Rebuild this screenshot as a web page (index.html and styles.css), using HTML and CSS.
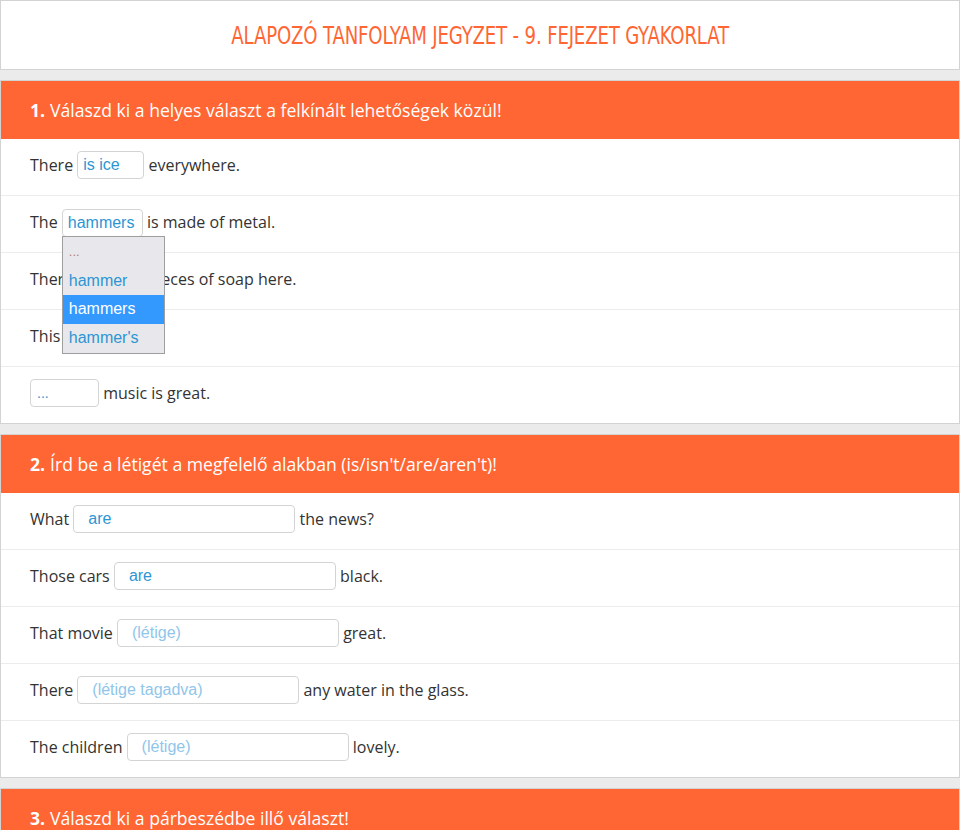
FILE: index.html
```html
<!DOCTYPE html>
<html lang="hu">
<head>
<meta charset="utf-8">
<title>Alapozó tanfolyam jegyzet</title>
<link rel="stylesheet" href="styles.css">
</head>
<body>
<div class="page">
  <header class="top">
    <h1 class="title"><span class="title-text">ALAPOZÓ TANFOLYAM JEGYZET - 9. FEJEZET GYAKORLAT</span></h1>
  </header>

  <section class="card">
    <div class="card-head"><b>1.</b> Válaszd ki a helyes választ a felkínált lehetőségek közül!</div>
    <div class="row">There <input class="box w67" value="is ice"> everywhere.</div>
    <div class="row">The <span class="sel-wrap"><select class="box sel w81"><option>hammers</option></select><span class="dropdown"><span class="opt dots">...</span><span class="opt">hammer</span><span class="opt active">hammers</span><span class="opt">hammer's</span></span></span> is made of metal.</div>
    <div class="row">There <input class="box w66 small" value="..."> pieces of soap here.</div>
    <div class="row">This <input class="box w69 small" value="..."></div>
    <div class="row"><input class="box w69 small" value="..."> music is great.</div>
  </section>

  <section class="card">
    <div class="card-head"><b>2.</b> Írd be a létigét a megfelelő alakban (is/isn't/are/aren't)!</div>
    <div class="row">What <input class="box wide" value="are"> the news?</div>
    <div class="row">Those cars <input class="box wide" value="are"> black.</div>
    <div class="row">That movie <input class="box wide" placeholder="(létige)"> great.</div>
    <div class="row">There <input class="box wide" placeholder="(létige tagadva)"> any water in the glass.</div>
    <div class="row">The children <input class="box wide" placeholder="(létige)"> lovely.</div>
  </section>

  <section class="card">
    <div class="card-head"><b>3.</b> Válaszd ki a párbeszédbe illő választ!</div>
  </section>
</div>
</body>
</html>
```
FILE: styles.css
```css
html, body {
  margin: 0;
  padding: 0;
}
body {
  background: #ebebeb;
  font-family: "Open Sans", "Noto Sans", sans-serif;
  color: #333;
  font-size: 16px;
}
.page {
  display: flex;
  flex-direction: column;
  gap: 10px;
  height: 830px;
  overflow: hidden;
}
.top {
  background: #fff;
  border: 1px solid #d3d3d3;
  height: 68px;
  display: flex;
  align-items: center;
  justify-content: center;
  flex-shrink: 0;
}
.title {
  margin: 0;
  font-weight: normal;
  font-size: 24px;
  color: #ff6633;
  line-height: 1;
}
.title-text {
  display: inline-block;
  font-family: "DejaVu Sans Condensed", "DejaVu Sans", sans-serif;
  transform: scaleX(0.84);
  letter-spacing: -0.2px;
}
.card {
  background: #fff;
  border: 1px solid #d3d3d3;
  flex-shrink: 0;
}
.card-head {
  background: #ff6633;
  color: #fff;
  height: 58px;
  display: flex;
  align-items: center;
  gap: 5px;
  padding-left: 29px;
  font-size: 17.6px;
}
.card-head b {
  font-weight: 700;
}
.row {
  box-sizing: border-box;
  height: 57px;
  border-top: 1px solid #ececec;
  padding: 12px 0 0 29px;
  display: flex;
  align-items: flex-start;
  line-height: 28px;
  white-space: pre;
}
.card-head + .row {
  border-top: none;
  height: 56px;
}
.box {
  box-sizing: border-box;
  height: 28px;
  border: 1px solid #d4d4d4;
  border-radius: 4px;
  background: #fff;
  font-family: "Liberation Sans", Arial, sans-serif;
  font-size: 16px;
  color: #2d95d3;
  padding: 0 5px;
  margin: 0;
  outline: none;
}
.box::placeholder {
  color: #8fc6ea;
}
.small {
  font-size: 14px;
  padding-left: 6px;
}
.w66 { width: 66px; }
.w67 { width: 67px; }
.w69 { width: 69px; }
.w81 { width: 81px; }
.wide {
  width: 222px;
  padding-left: 14px;
}
.sel {
  -webkit-appearance: none;
  appearance: none;
}
.sel-wrap {
  position: relative;
  display: inline-block;
  height: 28px;
}
.dropdown {
  position: absolute;
  left: 0;
  top: 28px;
  width: 103px;
  box-sizing: border-box;
  background: #e8e8ec;
  border: 1px solid #9e9e9e;
  padding: 1px 0 1px;
  display: flex;
  flex-direction: column;
  z-index: 5;
}
.opt {
  height: 28.5px;
  line-height: 28px;
  padding-left: 6px;
  font-family: "Liberation Sans", Arial, sans-serif;
  font-size: 16px;
  color: #2d95d3;
}
.opt.dots {
  color: #b08070;
  font-size: 13px;
}
.opt.active {
  background: #3399ff;
  color: #fff;
}
```
